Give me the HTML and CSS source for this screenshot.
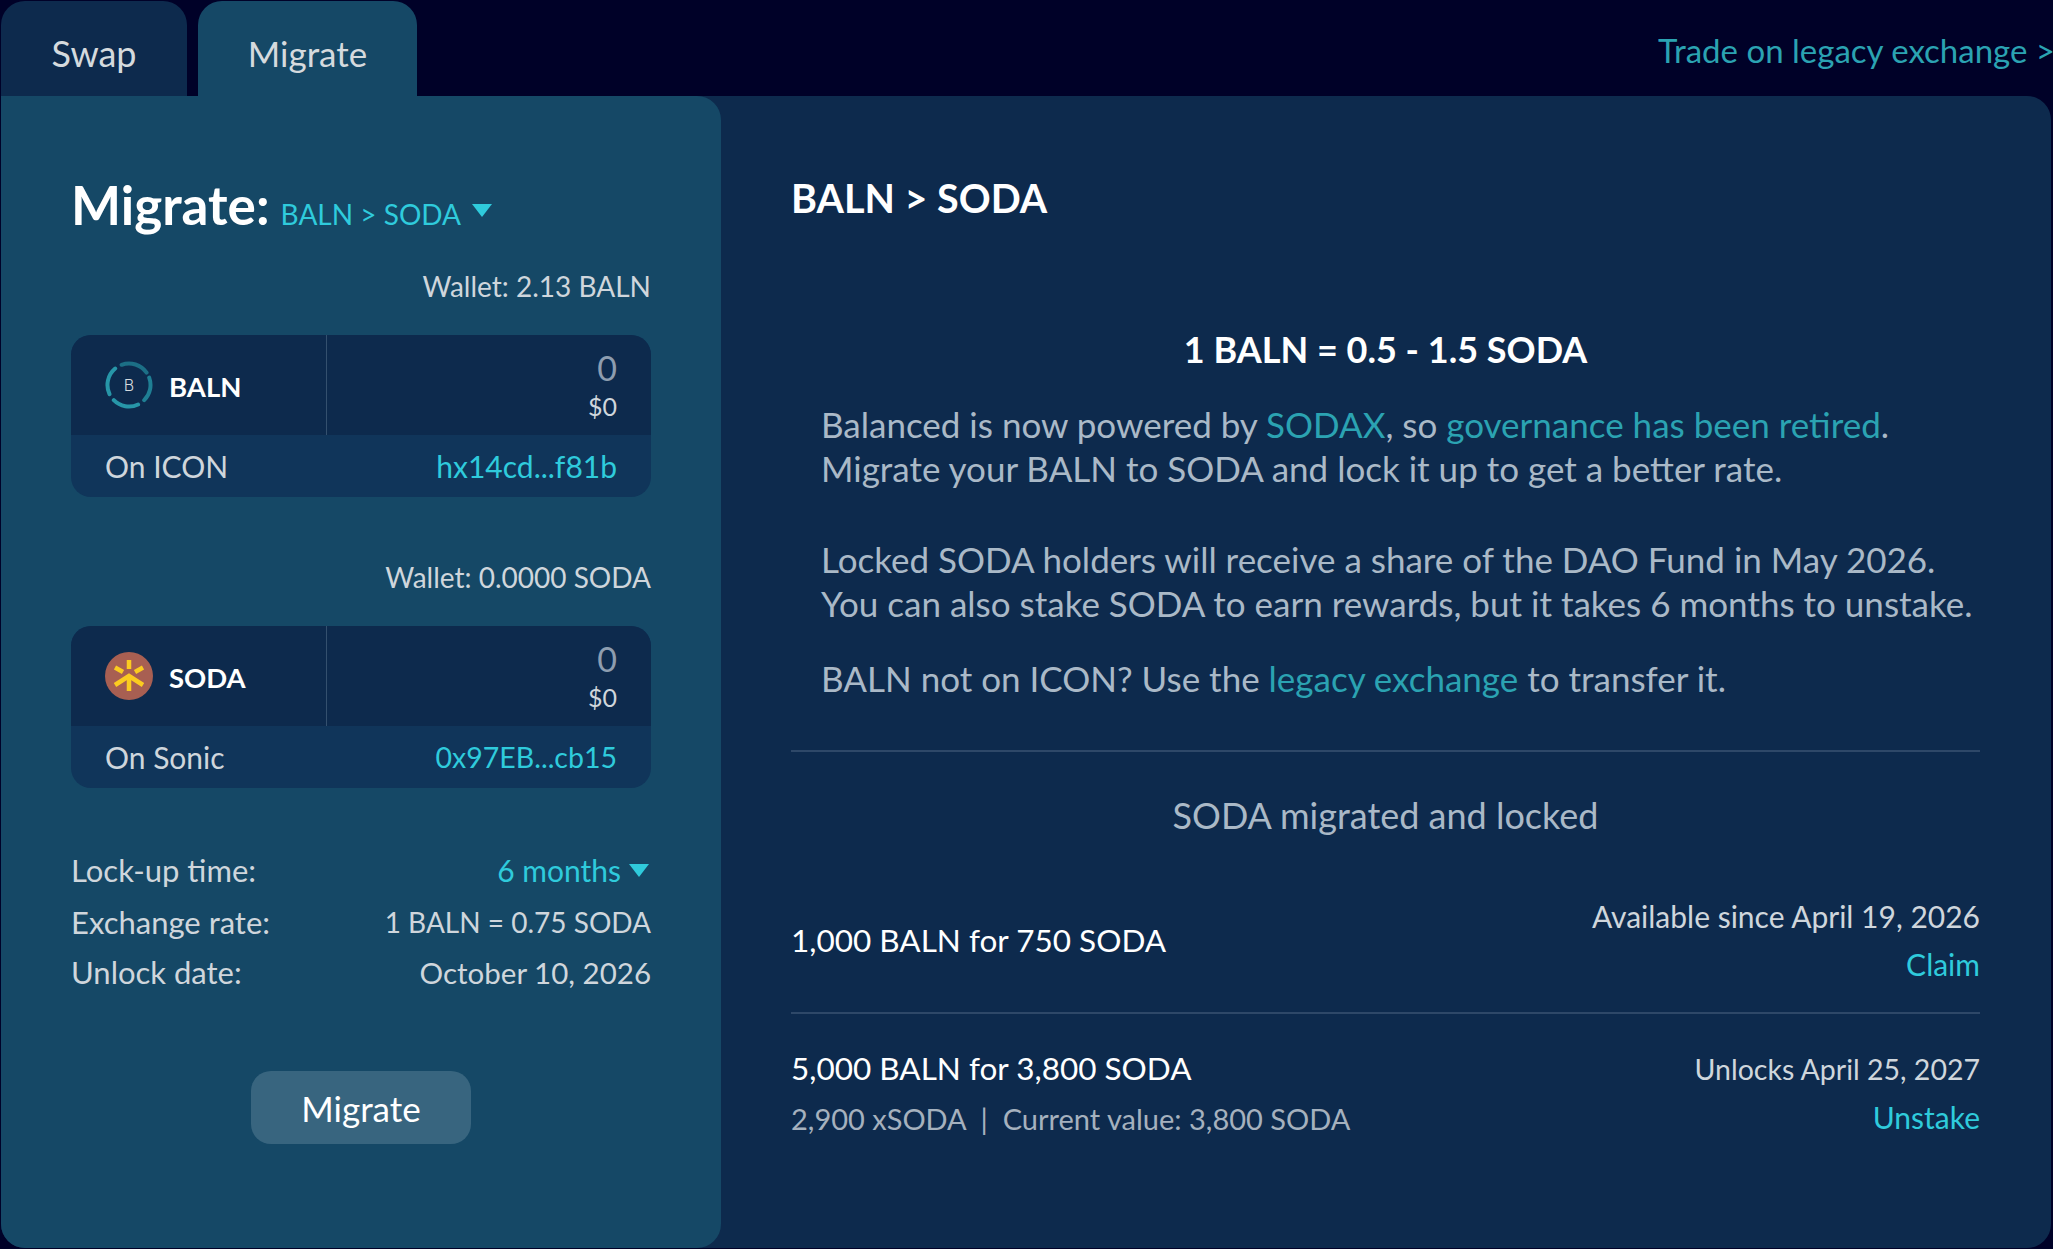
FILE: index.html
```html
<!DOCTYPE html>
<html lang="en">
<head>
    <meta charset="UTF-8">
    <title>Balanced - Migrate</title>
    <link rel="stylesheet" href="styles.css">
</head>
<body>
    <div class="topbar">
        <div class="tabs">
            <div class="tab">Swap</div>
            <div class="tab tab-active">Migrate</div>
        </div>
        <a class="legacy-link">Trade on legacy exchange <span class="legacy-arrow">&gt;</span></a>
    </div>

    <div class="panels">
        <div class="left-panel">
            <div class="migrate-title">
                <h1>Migrate:</h1>
                <span class="pair-select">BALN &gt; SODA</span>
                <span class="caret caret-pair"></span>
            </div>

            <div class="wallet wallet-first">Wallet: 2.13 BALN</div>
            <div class="token-card">
                <div class="token-top">
                    <div class="token-name">
                        <svg class="token-icon" viewBox="0 0 48 48">
                            <g fill="none" stroke="#2796a8" stroke-width="4" stroke-linecap="round">
                                <path d="M10.200 7.500A21.500 21.500 0 0 0 4.500 33.100"/>
                                <path d="M8.800 39.200A21.500 21.500 0 0 0 33.100 43.500"/>
                                <path d="M39.200 39.200A21.500 21.500 0 0 0 44.200 16.600" stroke="#1f7f94"/>
                                <path d="M41.600 11.700A21.500 21.500 0 0 0 16.600 3.800" stroke="#1c6f86"/>
                            </g>
                            <text x="24" y="30" class="icon-letter">B</text>
                        </svg>
                        <span class="token-label">BALN</span>
                    </div>
                    <div class="token-amount">
                        <div class="amount">0</div>
                        <div class="amount-usd">$0</div>
                    </div>
                </div>
                <div class="token-bottom">
                    <span>On ICON</span>
                    <span class="cyan">hx14cd...f81b</span>
                </div>
            </div>

            <div class="wallet wallet-second">Wallet: 0.0000 SODA</div>
            <div class="token-card">
                <div class="token-top">
                    <div class="token-name">
                        <svg class="token-icon" viewBox="0 0 48 48">
                            <circle cx="24" cy="24" r="24" fill="#a85f52"/>
                            <g stroke="#fbcb20" stroke-width="4.500" fill="none">
                                <path d="M24 8V17"/>
                                <path d="M10 15.500L18 20"/>
                                <path d="M38 15.500L30 20"/>
                                <path d="M24 24V39"/>
                                <path d="M10 33L24 24L38 33"/>
                            </g>
                        </svg>
                        <span class="token-label">SODA</span>
                    </div>
                    <div class="token-amount">
                        <div class="amount">0</div>
                        <div class="amount-usd">$0</div>
                    </div>
                </div>
                <div class="token-bottom">
                    <span>On Sonic</span>
                    <span class="cyan addr-sonic">0x97EB...cb15</span>
                </div>
            </div>

            <div class="details">
                <div class="detail-row detail-row-first">
                    <span>Lock-up time:</span>
                    <span class="lock-select"><span class="cyan">6 months</span><span class="caret"></span></span>
                </div>
                <div class="detail-row">
                    <span>Exchange rate:</span>
                    <span class="detail-value detail-rate">1 BALN = 0.75 SODA</span>
                </div>
                <div class="detail-row">
                    <span>Unlock date:</span>
                    <span class="detail-value">October 10, 2026</span>
                </div>
            </div>

            <div class="migrate-action">
                <button class="migrate-btn">Migrate</button>
            </div>
        </div>

        <div class="right-panel">
            <h2>BALN &gt; SODA</h2>
            <div class="rate-line">1 BALN = 0.5 - 1.5 SODA</div>

            <div class="intro">
                <p>Balanced is now powered by <a>SODAX</a>, so <a>governance has been retired</a>.<br>Migrate your BALN to SODA and lock it up to get a better rate.</p>
                <p>Locked SODA holders will receive a share of the DAO Fund in May 2026.<br>You can also stake SODA to earn rewards, but it takes 6 months to unstake.</p>
                <p class="intro-last">BALN not on ICON? Use the <a>legacy exchange</a> to transfer it.</p>
            </div>

            <div class="locked-section">
                <div class="locked-title">SODA migrated and locked</div>

                <div class="lock-row lock-row-first">
                    <div class="lock-main">1,000 BALN for 750 SODA</div>
                    <div class="lock-side">
                        <div>Available since April 19, 2026</div>
                        <a class="cyan">Claim</a>
                    </div>
                </div>

                <div class="lock-row lock-row-second">
                    <div>
                        <div class="lock-main">5,000 BALN for 3,800 SODA</div>
                        <div class="lock-sub">2,900 xSODA &nbsp;|&nbsp; Current value: 3,800 SODA</div>
                    </div>
                    <div class="lock-side">
                        <div>Unlocks April 25, 2027</div>
                        <a class="cyan">Unstake</a>
                    </div>
                </div>
            </div>
        </div>
    </div>
</body>
</html>
```

FILE: styles.css
```css
* {
    box-sizing: border-box;
}

html, body {
    height: 100%;
}

body {
    margin: 0;
    padding: 1px 2px 1px 1px;
    background-color: #000128;
    font-family: "Lato", "Open Sans", sans-serif;
    font-size: 29px;
    color: #cfd6dc;
    display: flex;
    flex-direction: column;
}

.cyan {
    color: #2fcbdc;
}

.topbar {
    display: flex;
    justify-content: space-between;
    height: 95px;
}

.tabs {
    display: flex;
    gap: 11px;
}

.tab {
    width: 186px;
    padding-top: 31px;
    background-color: #0d2a4d;
    border-radius: 24px 24px 0 0;
    text-align: center;
    font-size: 36px;
    line-height: 42px;
    color: #d5dade;
}

.tab-active {
    width: 219px;
    background-color: #154866;
    font-size: 35px;
}

.legacy-link {
    padding-top: 30px;
    font-size: 33px;
    line-height: 38px;
    color: #2ba3b2;
    white-space: nowrap;
}

.legacy-arrow {
    margin-right: -4px;
}

.panels {
    flex: 1;
    display: flex;
    background-color: #0d2a4d;
    border-radius: 0 24px 24px 24px;
}

.left-panel {
    width: 720px;
    padding: 78px 70px 0 70px;
    background-color: #154866;
    border-radius: 0 24px 24px 24px;
}

.migrate-title {
    display: flex;
    align-items: baseline;
    color: #fff;
}

.migrate-title h1 {
    margin: 0;
    font-size: 53px;
    line-height: 62px;
    font-weight: 700;
}

.pair-select {
    margin-left: 11px;
    font-size: 28px;
    color: #2fcbdc;
}

.caret {
    display: inline-block;
    width: 0;
    height: 0;
    border-left: 10px solid transparent;
    border-right: 10px solid transparent;
    border-top: 13px solid #2fcbdc;
}

.caret-pair {
    margin: 11px 0 0 11px;
    align-self: center;
}

.wallet {
    text-align: right;
    font-size: 28px;
    line-height: 36px;
}

.wallet-first {
    margin-top: 32px;
}

.wallet-second {
    margin-top: 62px;
}

.token-card {
    margin-top: 31px;
    height: 162px;
    background-color: #10355a;
    border-radius: 20px;
    overflow: hidden;
}

.token-top {
    display: flex;
    height: 100px;
    background-color: #0d2a4d;
}

.token-name {
    width: 256px;
    padding-left: 34px;
    display: flex;
    align-items: center;
    gap: 16px;
    font-size: 27.500px;
    font-weight: 700;
    color: #fff;
    border-right: 1px solid #34506e;
}

.token-label {
    padding-top: 3px;
}

.token-icon {
    width: 48px;
    height: 48px;
}

.icon-letter {
    font-family: "Inter", sans-serif;
    font-size: 16px;
    font-weight: 300;
    text-anchor: middle;
    fill: #d5dade;
}

.token-amount {
    flex: 1;
    padding: 12px 34px 0 0;
    text-align: right;
}

.amount {
    font-size: 34px;
    line-height: 42px;
    color: #8d9db0;
}

.amount-usd {
    font-size: 25px;
    line-height: 35px;
}

.token-bottom {
    display: flex;
    justify-content: space-between;
    padding: 12px 34px 0;
    font-size: 30px;
    line-height: 38px;
}

.addr-sonic {
    font-size: 28.500px;
}

.details {
    margin-top: 55px;
    font-size: 31px;
}

.detail-row {
    display: flex;
    justify-content: space-between;
    align-items: center;
    height: 50px;
}

.detail-row-first {
    height: 54px;
}

.detail-value {
    font-size: 29.500px;
}

.detail-value.detail-rate {
    font-size: 28px;
}

.lock-select {
    display: flex;
    align-items: center;
    gap: 8px;
    padding-right: 2px;
    font-size: 30px;
}

.migrate-action {
    margin-top: 74px;
    display: flex;
    justify-content: center;
}

.migrate-btn {
    width: 220px;
    height: 73px;
    border: none;
    border-radius: 20px;
    background-color: #38657f;
    color: #fff;
    font-family: inherit;
    font-size: 35px;
}

.right-panel {
    flex: 1;
    padding: 75px 71px 0 70px;
}

.right-panel h2 {
    margin: 0;
    font-size: 39.500px;
    line-height: 54px;
    font-weight: 700;
    color: #fff;
}

.rate-line {
    margin-top: 101px;
    text-align: center;
    font-size: 36px;
    line-height: 46px;
    font-weight: 700;
    color: #fff;
}

.intro {
    margin-top: 30px;
    padding: 0 0 0 30px;
    font-size: 35px;
    line-height: 44px;
    color: #aab9c7;
}

.intro p {
    margin: 0 0 47px;
}

.intro .intro-last {
    margin: -16px 0 0;
}

.intro a {
    color: #2ba3b2;
}

.locked-section {
    margin-top: 50px;
    border-top: 2px solid #2e4868;
}

.locked-title {
    margin-top: 41px;
    text-align: center;
    font-size: 36px;
    line-height: 44px;
    color: #aab9c7;
}

.lock-row {
    display: flex;
    justify-content: space-between;
    align-items: center;
}

.lock-row-first {
    margin-top: 55px;
    padding-bottom: 24px;
    border-bottom: 2px solid #2e4868;
}

.lock-row-second {
    padding-top: 31px;
}

.lock-main {
    font-size: 31.500px;
    line-height: 44px;
    color: #fff;
}

.lock-sub {
    margin-top: 7px;
    font-size: 29px;
    line-height: 44px;
    color: #a5b1be;
}

.lock-side {
    text-align: right;
    font-size: 30px;
    line-height: 48px;
}

.lock-row-second .lock-side {
    font-size: 28.500px;
}

.lock-side a {
    font-size: 30px;
}
```
